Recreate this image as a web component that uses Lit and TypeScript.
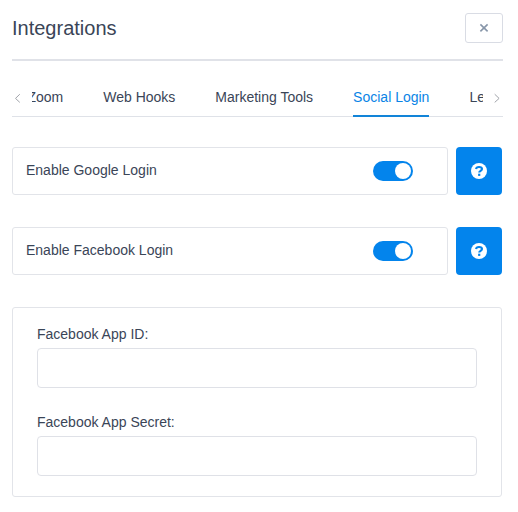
import { LitElement, html, css, svg } from "lit";
import { customElement, property, state } from "lit/decorators.js";
import { classMap } from "lit/directives/class-map.js";

@customElement("setting-toggle")
class SettingToggle extends LitElement {
  @property() label = "";
  @property({ type: Boolean }) on = false;

  static styles = css`
    :host { display: flex; gap: 8px; height: 48px; }
    .card {
      flex: 1; box-sizing: border-box; display: flex; align-items: flex-start;
      justify-content: space-between; padding: 13px 34px 0 13px;
      border: 1px solid #e2e4e9; border-radius: 3px; color: #3a4557;
    }
    .label { line-height: 18px; }
    .switch {
      box-sizing: border-box; width: 40px; height: 20px; padding: 2px; border: 0;
      border-radius: 10px; background: #c6ccd6; display: flex;
    }
    .switch.on { background: #0384ec; justify-content: flex-end; }
    .knob { width: 16px; height: 16px; border-radius: 50%; background: #fff; }
    .help {
      width: 46px; padding: 0; border: 0; border-radius: 4px; background: #0384ec;
      display: flex; align-items: center; justify-content: center;
    }
    .help svg { width: 16px; height: 16px; display: block; }
  `;

  render() {
    return html`
      <div class="card">
        <span class="label">${this.label}</span>
        <button class=${classMap({ switch: true, on: this.on })} role="switch"
          aria-checked=${this.on} @click=${() => (this.on = !this.on)}>
          <span class="knob"></span>
        </button>
      </div>
      <button class="help" aria-label="Help">
        <svg viewBox="0 0 16 16" fill="none">
          <circle cx="8" cy="8" r="8" fill="#fff" />
          <path d="M5 6C5.200 4.600 6.300 4 8 4c1.900 0 3 .8 3 2.100 0 1.800-2.800 1.700-2.800 3.500"
            stroke="#0384ec" stroke-width="2.100" />
          <rect x="7.100" y="10.700" width="2.200" height="2.200" fill="#0384ec" />
        </svg>
      </button>`;
  }
}

@customElement("app-root")
class AppRoot extends LitElement {
  @state() active = "Social Login";
  tabs = ["Zoom", "Web Hooks", "Marketing Tools", "Social Login", "Learndash"];
  fields = ["Facebook App ID:", "Facebook App Secret:"];

  static styles = css`
    :host {
      display: block; box-sizing: border-box; height: 512px; padding: 13px 16px 0 12px;
      background: #fff; color: #3a4557; overflow: hidden;
      font: 14px "Liberation Sans", Arial, sans-serif;
    }
    .header {
      display: flex; justify-content: space-between; height: 46px; margin-right: -1px;
      border-bottom: 2px solid #e0e2e8;
    }
    .title { margin: 0; font-size: 20px; line-height: 30px; font-weight: 400; }
    .close {
      box-sizing: border-box; width: 38px; height: 30px; padding: 0; background: #fff;
      border: 1px solid #d9dce4; border-radius: 3px;
      display: flex; align-items: center; justify-content: center;
    }
    .close svg { width: 10px; height: 10px; }
    .nav {
      display: flex; align-items: stretch; height: 37px; margin: 19px -1px 0 0;
      box-shadow: inset 0 -1px #dfe2e8;
    }
    .arrow { width: 20px; display: flex; padding-top: 13px; box-sizing: border-box; }
    .arrow.prev { padding-left: 2px; }
    .arrow.next { justify-content: flex-end; padding-right: 3px; }
    .arrow svg { width: 6px; height: 10px; }
    .view { flex: 1; min-width: 0; overflow: hidden; }
    .tabs { display: flex; gap: 40px; margin-left: -4.600px; height: 37px; }
    .tab {
      flex: none; box-sizing: border-box; height: 37px; padding: 8px 0 0; border: 0;
      background: none; color: inherit; font: inherit; line-height: 18px;
      display: flex; align-items: flex-start;
    }
    .tab.active { color: #0a84e6; border-bottom: 2px solid #1284d8; }
    .rows { display: flex; flex-direction: column; gap: 32px; margin-top: 30px; }
    .panel {
      box-sizing: border-box; height: 190px; margin-top: 32px; padding: 17px 24px 0;
      border: 1px solid #e2e4e9; border-radius: 3px;
      display: flex; flex-direction: column; gap: 25px;
    }
    .field { display: flex; flex-direction: column; gap: 5px; height: 63px; }
    .name { line-height: 18px; }
    .input {
      box-sizing: border-box; width: 100%; height: 40px; border: 1px solid #dfe1e7;
      border-radius: 4px; background: #fff; outline: 0;
    }
  `;

  arrow(side: string, d: string) {
    return html`<span class="arrow ${side}"><svg viewBox="0 0 6 10" fill="none"
      stroke="#a0a3a9">${svg`<path d=${d} />`}</svg></span>`;
  }

  render() {
    return html`
      <header class="header">
        <h1 class="title">Integrations</h1>
        <button class="close" aria-label="Close">
          <svg viewBox="0 0 10 10" stroke="#8796a9" stroke-width="1.600">
            <path d="M1.400 1.400 8.600 8.400M8.600 1.400 1.400 8.400" />
          </svg>
        </button>
      </header>
      <nav class="nav">
        ${this.arrow("prev", "M5.800 1.200 1.500 5.400l4.300 4")}
        <div class="view">
          <div class="tabs">
            ${this.tabs.map((t) => html`<button
              class=${classMap({ tab: true, active: t === this.active })}
              @click=${() => (this.active = t)}>${t}</button>`)}
          </div>
        </div>
        ${this.arrow("next", "M.7 1.200 5.100 5.400 .7 9.400")}
      </nav>
      <div class="rows">
        <setting-toggle label="Enable Google Login" on></setting-toggle>
        <setting-toggle label="Enable Facebook Login" on></setting-toggle>
      </div>
      <section class="panel">
        ${this.fields.map((f) => html`<label class="field">
          <span class="name">${f}</span><input class="input" type="text" />
        </label>`)}
      </section>`;
  }
}
